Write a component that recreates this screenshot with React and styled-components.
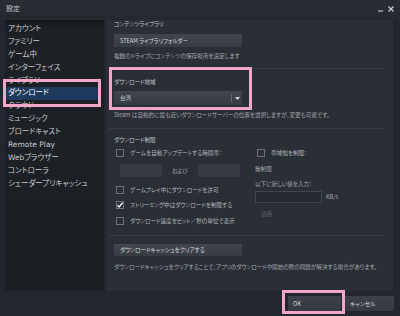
import React from "react";
import styled, { createGlobalStyle } from "styled-components";

const GlobalStyle = createGlobalStyle`
  html, body {
    margin: 0;
    padding: 0;
    background: #23262c;
  }
  * {
    box-sizing: border-box;
  }
`;

const sideItems = [
  "アカウント",
  "ファミリー",
  "ゲーム中",
  "インターフェイス",
  "ライブラリ",
  "ダウンロード",
  "クラウド",
  "ミュージック",
  "ブロードキャスト",
  "Remote Play",
  "Webブラウザー",
  "コントローラ",
  "シェーダープリキャッシュ",
];

const Check = ({ checked }) => (
  <Box>
    {checked && (
      <svg width="8" height="8" viewBox="0 0 8 8">
        <polyline
          points="1.5,4.2 3.2,6 6.6,1.6"
          fill="none"
          stroke="#ffffff"
          strokeWidth="1.3"
        />
      </svg>
    )}
  </Box>
);

const App = () => {
  return (
    <>
      <GlobalStyle />
      <Window>
        <TitleBar>
          <Title>設定</Title>
          <Controls>
            <MinIcon />
            <svg width="6" height="6" viewBox="0 0 6 6">
              <path d="M0.5 0.5 L5.5 5.5 M5.5 0.5 L0.5 5.5" stroke="#c9ccd0" strokeWidth="1.2" />
            </svg>
          </Controls>
        </TitleBar>
        <Body>
          <Sidebar>
            {sideItems.map((item) => (
              <SideItem key={item} $active={item === "ダウンロード"}>
                {item}
              </SideItem>
            ))}
          </Sidebar>
          <Main>
            <Label>コンテンツライブラリ</Label>
            <Button $mt={6} $h={13}>STEAM ライブラリフォルダー</Button>
            <Text $mt={5}>複数のドライブにコンテンツの保存場所を設定します</Text>
            <Divider $mt={8} />
            <Label $mt={9}>ダウンロード地域</Label>
            <Select>
              <span>台湾</span>
              <Caret>
                <svg width="5" height="3" viewBox="0 0 5 3">
                  <path d="M0 0 L5 0 L2.5 3 Z" fill="#d6d9dc" />
                </svg>
              </Caret>
            </Select>
            <Text $mt={6}>
              Steam は自動的に最も近いダウンロードサーバーの位置を選択しますが、変更も可能です。
            </Text>
            <Divider $mt={9} />
            <Label $mt={7}>ダウンロード制限</Label>
            <Columns>
              <Column>
                <CheckRow>
                  <Check />
                  <span>ゲームを自動アップデートする時間帯：</span>
                </CheckRow>
                <TimeRow>
                  <Field />
                  <Text>および</Text>
                  <Field />
                </TimeRow>
                <CheckRow $mt={9}>
                  <Check />
                  <span>ゲームプレイ中にダウンロードを許可</span>
                </CheckRow>
                <CheckRow $mt={7}>
                  <Check checked />
                  <span>ストリーミング中はダウンロードを制限する</span>
                </CheckRow>
                <CheckRow $mt={8}>
                  <Check />
                  <span>ダウンロード速度をビット／秒の単位で表示</span>
                </CheckRow>
              </Column>
              <RightColumn>
                <CheckRow>
                  <Check />
                  <span>帯域幅を制限：</span>
                </CheckRow>
                <Text $mt={8}>無制限</Text>
                <Text $mt={7}>以下に新しい値を入力：</Text>
                <RateRow>
                  <RateInput />
                  <Text>KB/s</Text>
                </RateRow>
                <Disabled>適用</Disabled>
              </RightColumn>
            </Columns>
            <Divider $mt={10} />
            <Button $mt={8} $h={12}>ダウンロードキャッシュをクリアする</Button>
            <Text $mt={7}>
              ダウンロードキャッシュをクリアすることで、アプリのダウンロードや開始の際の問題が解決する場合があります。
            </Text>
          </Main>
        </Body>
        <Footer>
          <FooterButton $w={53}>OK</FooterButton>
          <FooterButton $w={49}>キャンセル</FooterButton>
        </Footer>
        <Highlight style={{ left: 3, top: 79, width: 98, height: 28 }} />
        <Highlight style={{ left: 109, top: 67, width: 143, height: 43 }} />
        <Highlight style={{ left: 282, top: 290, width: 63, height: 24 }} />
      </Window>
    </>
  );
};

const Window = styled.div`
  position: relative;
  width: 400px;
  height: 316px;
  overflow: hidden;
  background: #23262c;
  font-family: "Noto Sans CJK JP", "Noto Sans", sans-serif;
  font-feature-settings: "palt";
  color: #b9bdc1;
`;

const TitleBar = styled.div`
  height: 20px;
  display: flex;
  align-items: flex-start;
  justify-content: space-between;
  padding: 4px 6px 0 6px;
  background: linear-gradient(#2a2d34, #25282e);
`;

const Title = styled.div`
  font-size: 7px;
  line-height: 8px;
  color: #c3c6ca;
`;

const Controls = styled.div`
  display: flex;
  align-items: center;
  gap: 5px;
  padding-top: 1px;
`;

const MinIcon = styled.div`
  width: 5px;
  height: 2px;
  margin-top: 5px;
  background: #7f838a;
`;

const Body = styled.div`
  display: flex;
  height: 271px;
  padding-left: 5px;
  gap: 2px;
`;

const Sidebar = styled.div`
  width: 100px;
  padding-top: 3px;
  background: linear-gradient(#15171b 0px, #1d2025 8px, #1c1f24 100%);
`;

const SideItem = styled.div`
  height: 12.9px;
  line-height: 12.9px;
  padding-left: 3px;
  width: 95px;
  font-family: "DejaVu Sans", "Noto Sans CJK JP", sans-serif;
  font-size: 7.5px;
  white-space: nowrap;
  color: ${(p) => (p.$active ? "#ffffff" : "#c8cbcf")};
  background: ${(p) => (p.$active ? "#1d3a5c" : "transparent")};
`;

const Main = styled.div`
  flex: 1;
  margin-right: 7px;
  padding: 0 8px;
  background: #2a2e35;
  display: flex;
  flex-direction: column;
  align-items: flex-start;
`;

const Label = styled.div`
  margin-top: ${(p) => p.$mt || 0}px;
  font-size: 5.6px;
  line-height: 8px;
  color: #c0c4c8;
  white-space: nowrap;
`;

const Text = styled.div`
  margin-top: ${(p) => p.$mt || 0}px;
  font-size: 5.6px;
  line-height: 8px;
  color: #a3a7ac;
  white-space: nowrap;
`;

const Button = styled.div`
  margin-top: ${(p) => p.$mt || 0}px;
  width: 128px;
  height: ${(p) => p.$h}px;
  padding-left: 6px;
  display: flex;
  align-items: center;
  font-size: 5.6px;
  color: #d3d6d9;
  background: linear-gradient(#41454d, #383c44);
`;

const Select = styled.div`
  margin-top: 5px;
  width: 128px;
  height: 14px;
  padding-left: 6px;
  display: flex;
  align-items: center;
  justify-content: space-between;
  font-size: 5.6px;
  color: #d3d6d9;
  background: linear-gradient(#41454d, #363a42);
`;

const Caret = styled.div`
  width: 11px;
  height: 8px;
  display: flex;
  align-items: center;
  justify-content: center;
  border-left: 1px solid #62666d;
`;

const Divider = styled.div`
  margin-top: ${(p) => p.$mt || 0}px;
  align-self: stretch;
  margin-left: -5px;
  margin-right: 1px;
  height: 1px;
  background: #393d44;
`;

const Columns = styled.div`
  margin-top: 5px;
  display: flex;
`;

const Column = styled.div`
  width: 141px;
  display: flex;
  flex-direction: column;
  align-items: flex-start;
`;

const RightColumn = styled(Column)`
  width: 130px;
`;

const CheckRow = styled.div`
  margin-top: ${(p) => p.$mt || 0}px;
  margin-left: 2px;
  height: 8px;
  display: flex;
  align-items: center;
  gap: 6px;
  font-size: 5.6px;
  color: #b3b7bb;
  white-space: nowrap;
`;

const Box = styled.div`
  width: 8px;
  height: 8px;
  border: 1px solid #6a6e75;
  display: flex;
  align-items: center;
  justify-content: center;
  flex-shrink: 0;
  svg {
    margin: -1px;
  }
`;

const TimeRow = styled.div`
  margin-top: 7px;
  margin-left: 6px;
  display: flex;
  align-items: center;
  gap: 10px;
`;

const Field = styled.div`
  width: 42px;
  height: 13px;
  background: #363a41;
`;

const RateRow = styled.div`
  margin-top: 3px;
  display: flex;
  align-items: center;
  gap: 4px;
`;

const RateInput = styled.div`
  width: 67px;
  height: 12px;
  border: 1px solid #41454c;
  background: #262930;
`;

const Disabled = styled.div`
  margin-top: 7px;
  margin-left: 6px;
  font-size: 5.6px;
  line-height: 8px;
  color: #5f636a;
`;

const Footer = styled.div`
  height: 25px;
  display: flex;
  justify-content: flex-end;
  align-items: flex-start;
  gap: 4px;
  padding: 5px 6px 0 0;
`;

const FooterButton = styled.div`
  width: ${(p) => p.$w}px;
  height: 15px;
  padding-left: 5px;
  display: flex;
  align-items: center;
  font-size: 5.6px;
  color: #d8dbde;
  background: linear-gradient(#3d414a, #353940);
`;

const Highlight = styled.div`
  position: absolute;
  border: 3px solid #f2a7c9;
  pointer-events: none;
`;

export default App;
